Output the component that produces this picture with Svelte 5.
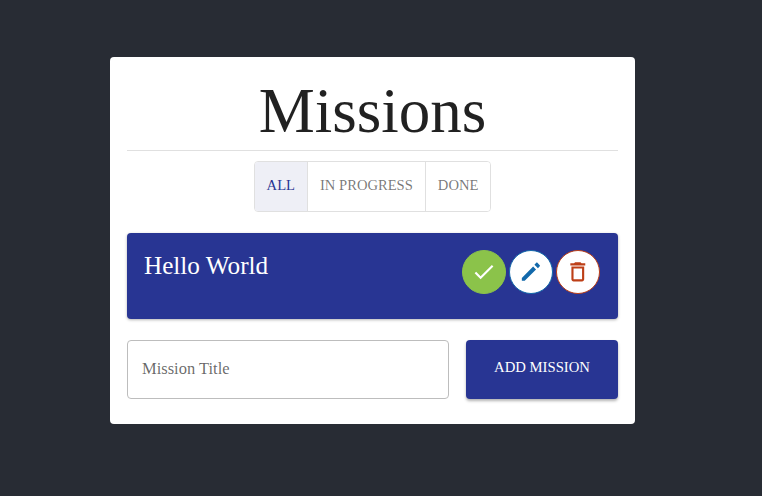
<script>
  let filter = $state('all');
  let title = $state('');
  const tabs = [
    { id: 'all', label: 'All' },
    { id: 'progress', label: 'In progress' },
    { id: 'done', label: 'Done' }
  ];
</script>

<main class="page">
  <section class="card">
    <h1>Missions</h1>
    <hr />
    <div class="tabs">
      {#each tabs as tab}
        <button class="tab" class:active={filter === tab.id} onclick={() => (filter = tab.id)}>{tab.label}</button>
      {/each}
    </div>

    <div class="mission">
      <span class="mission-title">Hello World</span>
      <div class="actions">
        <button class="round done" aria-label="Done">
          <svg viewBox="0 0 24 24"><path d="M9 16.17 4.83 12l-1.42 1.41L9 19 21 7l-1.41-1.41z" /></svg>
        </button>
        <button class="round edit" aria-label="Edit">
          <svg viewBox="0 0 24 24"><path d="M3.6 17.7v2.7h2.7L16.9 9.8 14.2 7.1 3.6 17.7zM20.4 6.9c.3-.3.3-.8 0-1.1l-2.2-2.2c-.3-.3-.8-.3-1.1 0l-1.7 1.7 3.3 3.3 1.7-1.7z" /></svg>
        </button>
        <button class="round delete" aria-label="Delete">
          <svg viewBox="0 0 24 24"><path d="M16 9v10H8V9h8m-1.5-6h-5l-1 1H5v2h14V4h-3.5l-1-1zM18 7H6v12c0 1.1.9 2 2 2h8c1.1 0 2-.9 2-2V7z" /></svg>
        </button>
      </div>
    </div>

    <form class="add" onsubmit={(e) => e.preventDefault()}>
      <input bind:value={title} placeholder="Mission Title" />
      <button class="add-btn" type="submit">Add mission</button>
    </form>
  </section>
</main>

<style>
  :global(body) {
    margin: 0;
    background: #282c34;
    font-family: "Liberation Serif", "Times New Roman", serif;
  }

  .page {
    height: 496px;
    box-sizing: border-box;
    padding: 57px 17px 0 0;
    display: flex;
    justify-content: center;
    align-items: flex-start;
  }

  .card {
    width: 525px;
    height: 367px;
    box-sizing: border-box;
    padding: 0 17px;
    background: #fff;
    border-radius: 4px;
    display: flex;
    flex-direction: column;
  }

  h1 {
    margin: 0;
    height: 93px;
    padding-top: 8px;
    box-sizing: border-box;
    font-size: 63px;
    font-weight: 400;
    line-height: 93px;
    text-align: center;
    color: rgba(0, 0, 0, 0.87);
  }

  hr {
    width: 100%;
    margin: 0;
    border: none;
    border-top: 1px solid #e0e0e0;
  }

  .tabs {
    align-self: center;
    display: flex;
    margin-top: 10px;
    height: 51px;
    box-sizing: border-box;
    border: 1px solid #e0e0e0;
    border-radius: 4px;
    overflow: hidden;
  }

  .tab {
    padding: 0 12px 2px;
    border: none;
    border-left: 1px solid #e0e0e0;
    background: #fff;
    color: rgba(0, 0, 0, 0.54);
    font-family: inherit;
    font-size: 14.6px;
    text-transform: uppercase;
  }

  .tab:first-child {
    border-left: none;
  }

  .tab.active {
    background: #eeeff6;
    color: #283593;
  }

  .mission {
    margin-top: 21px;
    height: 86px;
    box-sizing: border-box;
    padding: 17px 18px 0 17px;
    background: #283593;
    border-radius: 4px;
    box-shadow: 0 1px 3px rgba(0, 0, 0, 0.3);
    display: flex;
    justify-content: space-between;
    align-items: flex-start;
  }

  .mission-title {
    color: #fff;
    font-size: 25.2px;
    line-height: 32px;
  }

  .actions {
    display: flex;
    gap: 3px;
  }

  .round {
    width: 44px;
    height: 44px;
    box-sizing: border-box;
    padding: 0;
    border-radius: 50%;
    border: 1.5px solid transparent;
    background: #fff;
    display: flex;
    align-items: center;
    justify-content: center;
  }

  .round svg {
    width: 25.6px;
    height: 25.6px;
    fill: currentColor;
  }

  .round.done {
    background: #8bc34a;
    border-color: #8bc34a;
    color: #fff;
  }

  .round.edit {
    border-color: #1269ab;
    color: #1269ab;
  }

  .round.delete {
    border-color: #bd3f17;
    color: #bd3f17;
  }

  .add {
    margin-top: 21px;
    display: flex;
    justify-content: space-between;
  }

  input {
    width: 322px;
    height: 59px;
    box-sizing: border-box;
    padding: 0 14px 2px;
    border: 1px solid #bdbdbd;
    border-radius: 4px;
    font-family: inherit;
    font-size: 16.5px;
    outline: none;
  }

  input::placeholder {
    color: rgba(0, 0, 0, 0.6);
    opacity: 1;
  }

  .add-btn {
    width: 152px;
    height: 59px;
    padding: 0 0 4px;
    border: none;
    border-radius: 4px;
    background: #283593;
    color: #fff;
    font-family: inherit;
    font-size: 14.7px;
    text-transform: uppercase;
    box-shadow: 0 2px 3px rgba(0, 0, 0, 0.3);
  }
</style>
